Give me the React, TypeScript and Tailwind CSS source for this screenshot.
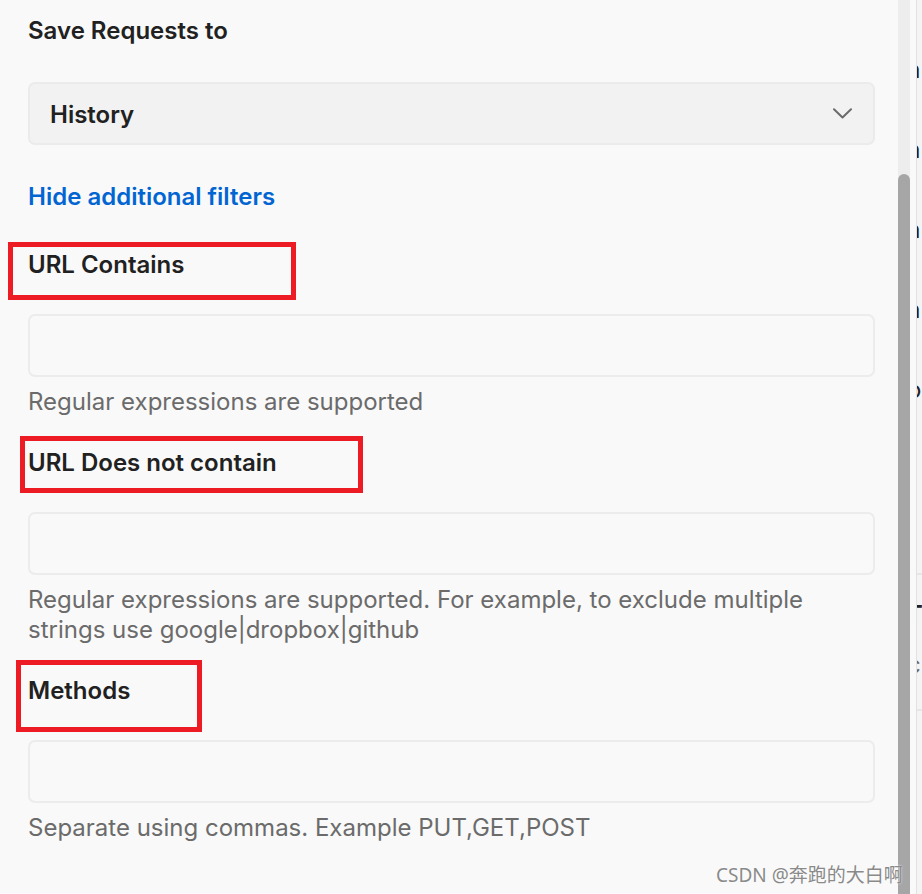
const font = { fontFamily: 'Inter, "Noto Sans", sans-serif' };

function Chevron() {
  return (
    <svg width="19" height="11" viewBox="0 0 19 11" fill="none" className="text-[#6b6b6b]">
      <path d="M1 1.2 9.5 9.5 18 1.2" stroke="currentColor" strokeWidth="2" strokeLinecap="round" strokeLinejoin="round" />
    </svg>
  );
}

function Field({ label, help }: { label: string; help: string[] }) {
  return (
    <div className="flex flex-col">
      <label className="text-[24px] leading-[30px] font-semibold text-[#212121]">{label}</label>
      <div className="mt-[34px] h-[63px] rounded-[7px] border-2 border-[#ececec] bg-[#f9f9f9]" />
      <p className="mt-[10px] text-[24px] leading-[30px] text-[#6b6b6b]">
        {help.map((line, i) => (
          <span key={i} className="block">{line}</span>
        ))}
      </p>
    </div>
  );
}

export default function App() {
  return (
    <div className="relative flex h-[894px] w-[922px] overflow-hidden bg-[#f9f9f9]" style={font}>
      {/* main settings panel */}
      <div className="w-[898px] shrink-0 pl-[28px] pr-[23px] pt-[16px]">
        <h2 className="text-[24px] leading-[30px] font-semibold text-[#212121]">Save Requests to</h2>

        <div className="mt-[36px] flex h-[63px] items-center justify-between rounded-[7px] border-2 border-[#ebebeb] bg-[#f2f2f2] pl-[20px] pr-[21px] pt-[3px]">
          <span className="text-[24px] font-semibold text-[#212121]">History</span>
          <div className="-mt-[3px]">
            <Chevron />
          </div>
        </div>

        <a className="mt-[37px] block text-[24px] leading-[30px] font-semibold text-[#0265d2]">Hide additional filters</a>

        <div className="mt-[38px] flex flex-col gap-[31px]">
          <Field label="URL Contains" help={['Regular expressions are supported']} />
          <Field
            label="URL Does not contain"
            help={[
              'Regular expressions are supported. For example, to exclude multiple',
              'strings use google|dropbox|github',
            ]}
          />
          <Field label="Methods" help={['Separate using commas. Example PUT,GET,POST']} />
        </div>
      </div>

      {/* scrollbar */}
      <div className="flex w-[12px] shrink-0 flex-col bg-[#ededed] pt-[174px]">
        <div className="flex-1 rounded-t-[6px] bg-[#a6a6a6]" />
      </div>

      <div className="w-[6px] shrink-0 bg-[#f9f9f9]" />

      {/* neighbouring pane, mostly cut off */}
      <div className="flex-1 overflow-hidden border-l border-[#e2e2e2] bg-[#f4f4f4] text-[24px] leading-[30px] text-[#212121]">
        <div className="-ml-[10px] flex flex-col">
          <span className="mt-[55px]">a</span>
          <span className="mt-[50px]">a</span>
          <span className="mt-[50px]">a</span>
          <span className="mt-[50px]">a</span>
          <span className="mt-[50px]">o</span>
          <div className="mt-[168px] h-[2px] bg-[#e6e6e6]" />
          <span className="mt-[25px] font-semibold">T</span>
          <span className="mt-[20px] text-[#6b6b6b]">c</span>
          <div className="mt-[29px] h-[2px] bg-[#e6e6e6]" />
        </div>
      </div>

      {/* red annotation boxes */}
      <div className="absolute left-[8px] top-[242px] h-[58px] w-[288px] border-[5px] border-[#ed1c24]" />
      <div className="absolute left-[20px] top-[436px] h-[57px] w-[343px] border-[5px] border-[#ed1c24]" />
      <div className="absolute left-[16px] top-[660px] h-[72px] w-[186px] border-[5px] border-[#ed1c24]" />

      {/* watermark */}
      <div
        className="absolute left-[716px] top-[862px] text-[19px] leading-[26px] text-[#8a8a8a] [text-shadow:0_0_2px_#fff]"
        style={{ fontFamily: '"Noto Sans", "Noto Sans CJK SC", sans-serif' }}
      >
        CSDN @奔跑的大白啊
      </div>
    </div>
  );
}
